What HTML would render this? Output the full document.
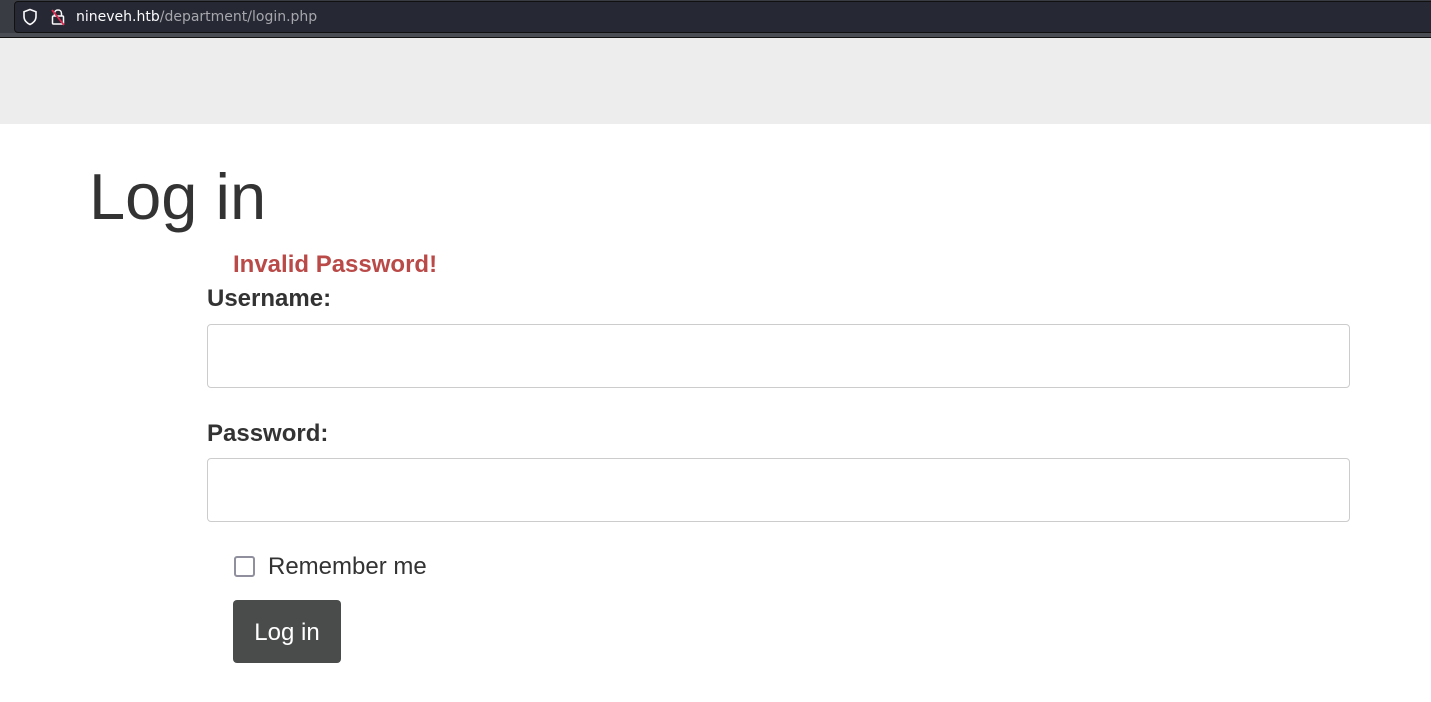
<!DOCTYPE html>
<html><head><style>
*{box-sizing:border-box;margin:0;padding:0}
body{width:1431px;height:702px;overflow:hidden;background:#fff;font-family:"Liberation Sans",sans-serif;color:#333;position:relative}
.top{position:absolute;left:0;top:0;width:1431px;height:38px;background:#3a3c44}
.strip{position:absolute;left:0;top:33px;width:1431px;height:4px;background:#4a4d53}
.line{position:absolute;left:0;top:37px;width:1431px;height:1px;background:#111}
.url{position:absolute;left:14px;top:1px;width:1430px;height:32px;background:#262833;border:1px solid #111;border-radius:4px}
.urltext{position:absolute;left:76px;top:9px;font-family:"DejaVu Sans",sans-serif;font-size:14px;color:#fbfbfe}
.urltext span{color:#a6a6ad}
.gray{position:absolute;left:0;top:38px;width:1431px;height:86px;background:#ededed}
.abs{position:absolute;white-space:nowrap}
h1{position:absolute;left:89px;top:157px;font-size:65px;font-weight:normal;color:#333;line-height:80px}
.err{left:233px;top:251px;font-size:24px;font-weight:bold;color:#b94a48}
.lbl{font-size:24px;font-weight:bold;color:#333}
.inp{position:absolute;left:207px;width:1143px;height:64px;border:1px solid #ccc;border-radius:4px}
.cb{position:absolute;left:234px;top:556px;width:21px;height:21px;border:2.5px solid #8f8f9d;border-radius:3px}
.btn{position:absolute;left:233px;top:600px;width:108px;height:63px;background:#4a4b4b;border-radius:4px;color:#fff;font-size:24px;text-align:center;line-height:65px}
</style></head><body>
<div class="top"></div><div class="strip"></div><div class="line"></div>
<div class="url"></div>
<svg class="abs" style="left:22px;top:8px" width="16" height="18" viewBox="0 0 16 18"><path d="M8 1.5 L14 3.8 V8.5 C14 12.5 11 15.3 8 16.5 C5 15.3 2 12.5 2 8.5 V3.8 Z" fill="none" stroke="#fbfbfe" stroke-width="1.6"/></svg>
<svg class="abs" style="left:50px;top:8px" width="16" height="18" viewBox="0 0 16 18"><path d="M4.5 8 V5.5 C4.5 3.3 6 2 8 2 C10 2 11.5 3.3 11.5 5.5 V8" fill="none" stroke="#fbfbfe" stroke-width="1.5"/><rect x="2.5" y="8" width="11" height="8" rx="1" fill="none" stroke="#fbfbfe" stroke-width="1.5"/><path d="M2 2 L14 17" stroke="#e22850" stroke-width="1.8"/></svg>
<div class="urltext">nineveh.htb<span>/department/login.php</span></div>
<div class="gray"></div>
<h1>Log in</h1>
<div class="abs err">Invalid Password!</div>
<div class="abs lbl" style="left:207px;top:285px">Username:</div>
<div class="inp" style="top:324px"></div>
<div class="abs lbl" style="left:207px;top:420px">Password:</div>
<div class="inp" style="top:458px"></div>
<div class="cb"></div>
<div class="abs" style="left:268px;top:553px;font-size:24px;color:#333">Remember me</div>
<div class="btn">Log in</div>
</body></html>
